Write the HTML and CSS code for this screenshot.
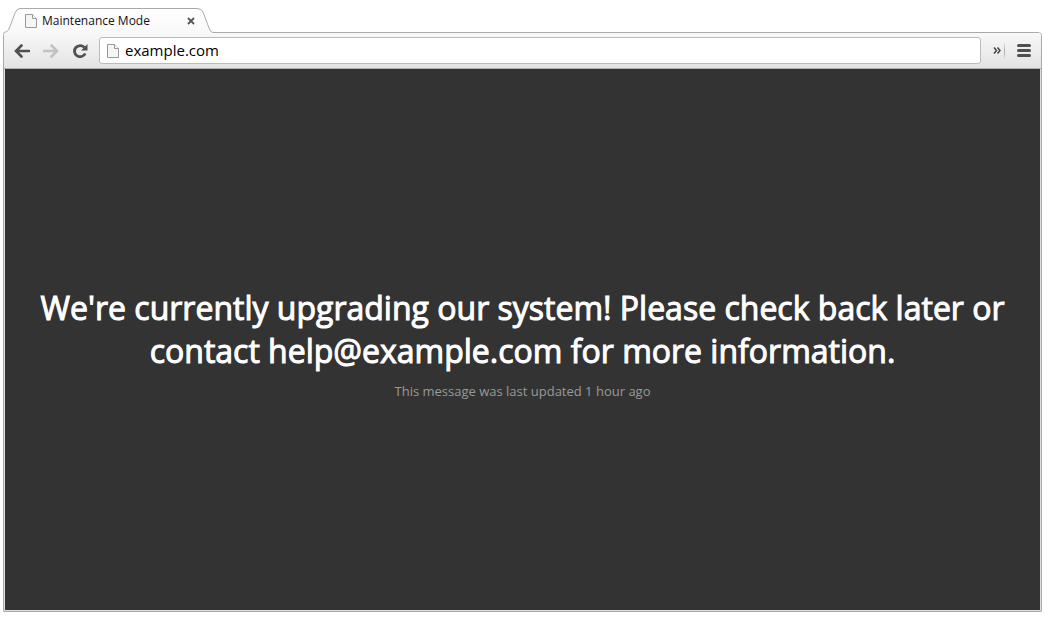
FILE: index.html
```
<!DOCTYPE html>
<html lang="en">
<head>
<meta charset="utf-8">
<meta name="viewport" content="width=device-width, initial-scale=1">
<title>Maintenance Mode</title>
<link rel="stylesheet" href="styles.css">
</head>
<body>
<div class="browser">
  <div class="tab-strip">
    <div class="tab">
      <svg class="tab-shape" viewBox="0 0 210 26" aria-hidden="true">
        <defs><linearGradient id="tab-fill" x1="0" y1="0" x2="0" y2="1"><stop offset="0" stop-color="#fff"/><stop offset="1" stop-color="#f8f8f8"/></linearGradient></defs>
        <path d="M0 26C1 24 4 25 6 21L12 5Q13.500 .5 17 .5H194Q198.500 .5 200 4L206 20Q207.500 24.500 210 24.500V26Z" fill="url(#tab-fill)"/>
        <path d="M.5 26C1 23 4 25 6 21L12 5Q13.500 .5 17 .5H194Q198.500 .5 200 4L206 20Q207.500 24.500 210 24.500" fill="none" stroke="#aaa"/>
      </svg>
      <svg class="page-icon" viewBox="0 0 12 14" aria-hidden="true"><path d="M.5 .5H7.500L11.500 4.500V13.500H.5Z" fill="#f5f5f5" stroke="#999"/><path d="M7.500 .5V4.500H11.500" fill="#fff" stroke="#999"/></svg>
      <span class="tab-title">Maintenance Mode</span>
      <button class="tab-close" type="button" aria-label="Close tab"><svg viewBox="0 0 8 8" aria-hidden="true"><path d="M1 1L7 7M7 1L1 7" stroke="#555" stroke-width="1.800"/></svg></button>
    </div>
  </div>
  <div class="window">
    <div class="toolbar">
      <button class="nav" type="button" aria-label="Back"><svg viewBox="0 0 16 14" aria-hidden="true"><path d="M7.500 1.500L2 7L7.500 12.500M2.500 7H15" fill="none" stroke="#505050" stroke-width="2.600" stroke-linecap="round"/></svg></button>
      <button class="nav" type="button" aria-label="Forward" disabled><svg viewBox="0 0 16 14" aria-hidden="true"><path d="M8.500 1.500L14 7L8.500 12.500M13.500 7H1" fill="none" stroke="#c2c2c2" stroke-width="2.600" stroke-linecap="round"/></svg></button>
      <button class="nav" type="button" aria-label="Reload"><svg viewBox="0 0 16 14" aria-hidden="true"><path d="M12.300 3.400A5.600 5.600 0 1 0 13.200 9.500" fill="none" stroke="#505050" stroke-width="2.800"/><path d="M15.500 0V6.500H9Z" fill="#505050"/></svg></button>
      <div class="address">
        <svg class="page-icon" viewBox="0 0 12 14" aria-hidden="true"><path d="M.5 .5H7.500L11.500 4.500V13.500H.5Z" fill="#f5f5f5" stroke="#999"/><path d="M7.500 .5V4.500H11.500" fill="#fff" stroke="#999"/></svg>
        <input class="url" type="text" value="example.com" aria-label="Address">
      </div>
      <button class="more" type="button" aria-label="More extensions"><svg viewBox="0 0 8 7" aria-hidden="true"><path d="M1 .5L3.500 3.500L1 6.500M4.500 .5L7 3.500L4.500 6.500" fill="none" stroke="#444" stroke-width="1.500"/></svg></button>
      <span class="divider"></span>
      <button class="menu" type="button" aria-label="Menu"><svg viewBox="0 0 14 13" aria-hidden="true"><path d="M1.500 1.500H12.500M1.500 6.500H12.500M1.500 11.500H12.500" stroke="#505050" stroke-width="3" stroke-linecap="round"/></svg></button>
    </div>
    <main class="page">
      <h1 class="message">We're currently upgrading our system! Please check back later or contact help@example.com for more information.</h1>
      <p class="updated">This message was last updated 1 hour ago</p>
    </main>
  </div>
</div>
</body>
</html>
```
FILE: styles.css
```
* { box-sizing: border-box; }
body { margin: 0; background: #fff; font-family: "Open Sans", sans-serif; }
button { padding: 0; border: 0; background: none; display: flex; align-items: center; justify-content: center; }
svg { display: block; flex: none; }

.browser { display: flex; flex-direction: column; min-height: 100vh; padding: 8px 2px 8px 3px; }
.tab-strip { display: flex; }
.tab { position: relative; z-index: 1; display: flex; align-items: center; width: 210px; height: 26px; margin-bottom: -2px; padding: 0 17px 0 22px; }
.tab-shape { position: absolute; inset: 0; width: 100%; height: 100%; }
.page-icon { position: relative; width: 12px; height: 14px; }
.tab-title { position: relative; flex: 1; margin-left: 5px; font: 12px/16px "Open Sans", sans-serif; color: #112; white-space: nowrap; }
.tab-close { position: relative; width: 10px; height: 16px; }
.tab-close svg { width: 8px; height: 8px; }

.window { flex: 1; display: flex; flex-direction: column; border: 1px solid #aaa; border-radius: 4px 4px 1px 1px; }
.toolbar { display: flex; align-items: center; height: 36px; padding: 0 9px 0 10px; background: linear-gradient(#f8f8f8, #e3e3e3); border-bottom: 1px solid #b0b0b0; border-radius: 3px 3px 0 0; }
.nav { width: 16px; height: 24px; margin-right: 13px; }
.nav svg { width: 16px; height: 14px; }
.address { flex: 1; display: flex; align-items: center; height: 27px; margin-left: -2px; padding: 0 7px; background: #fff; border: 1px solid #bbb; border-radius: 3px; }
.url { flex: 1; min-width: 0; height: 24px; margin-left: 6px; padding: 0 0 2px; border: 0; outline: 0; background: none; font: 15px/22px "Open Sans", sans-serif; color: #000; }
.more { width: 8px; height: 24px; margin-left: 12px; }
.more svg { width: 8px; height: 7px; }
.divider { width: 1px; height: 20px; margin: 0 11px 0 3px; background: linear-gradient(#eee, #aaa, #eee); }
.menu { width: 16px; height: 24px; }
.menu svg { width: 14px; height: 13px; }

.page { flex: 1; display: flex; flex-direction: column; align-items: center; justify-content: center; padding: 6px 24px 0; border: solid #ddd; border-width: 0 1px 1px; background: #333; text-align: center; }
.message { margin: 0; font-size: 32px; line-height: 43px; font-weight: 400; color: #fff; -webkit-text-stroke: 1px #fff; }
.updated { margin: 10px 0 0; font-size: 13px; line-height: 18px; color: #999; }
```
